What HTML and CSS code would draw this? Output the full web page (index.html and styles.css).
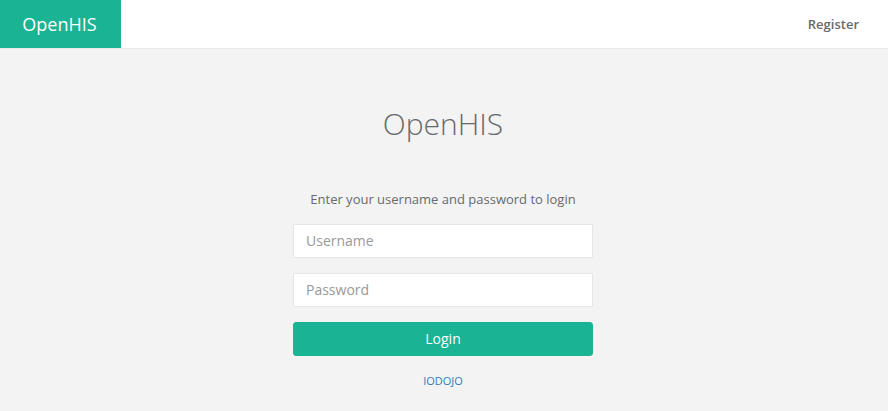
FILE: index.html
```html
<!DOCTYPE html>
<html>
<head>
<meta charset="utf-8">
<link rel="stylesheet" href="styles.css">
</head>
<body>
<nav class="navbar">
  <a class="brand" href="#">OpenHIS</a>
  <a class="nav-link" href="#">Register</a>
</nav>
<main class="content">
  <div class="login-box">
    <h1 class="logo">OpenHIS</h1>
    <p class="intro">Enter your username and password to login</p>
    <form class="form">
      <input class="field" type="text" placeholder="Username">
      <input class="field" type="password" placeholder="Password">
      <button class="btn" type="button">Login</button>
    </form>
    <a class="footer-link" href="#">IODOJO</a>
  </div>
</main>
</body>
</html>
```
FILE: styles.css
```css
* { box-sizing: border-box; }
html, body { margin: 0; height: 100%; }
body {
  background: #f3f3f4;
  font-family: "Open Sans", "Liberation Sans", sans-serif;
  font-size: 13px;
  color: #676a6c;
}
.navbar {
  display: flex;
  justify-content: space-between;
  align-items: stretch;
  height: 49px;
  background: #fff;
  border-bottom: 1px solid #e7eaec;
}
.brand {
  display: flex;
  align-items: center;
  justify-content: center;
  width: 121px;
  background: #1ab394;
  color: #fff;
  font-size: 18px;
  padding-right: 2px;
  text-decoration: none;
}
.nav-link {
  display: flex;
  align-items: center;
  padding: 0 29px 0 20px;
  color: #676a6c;
  font-weight: 600;
  font-size: 13px;
  text-decoration: none;
}
.content {
  display: flex;
  justify-content: center;
  padding-right: 2px;
}
.login-box {
  width: 300px;
  display: flex;
  flex-direction: column;
  align-items: center;
  padding-top: 55px;
}
.logo {
  margin: 0;
  font-size: 30px;
  font-weight: 300;
  line-height: 40px;
  color: #676a6c;
}
.intro {
  margin: 45px 0 0;
  line-height: 20px;
}
.form {
  width: 100%;
  display: flex;
  flex-direction: column;
  gap: 15px;
  margin-top: 15px;
}
.field {
  height: 34px;
  width: 100%;
  border: 1px solid #e5e6e7;
  border-radius: 1px;
  background: #fff;
  padding: 4px 12px 6px;
  font-family: inherit;
  font-size: 14px;
  color: #676a6c;
  outline: none;
}
.field::placeholder { color: #999; }
.btn {
  height: 34px;
  width: 100%;
  border: 1px solid #1ab394;
  border-radius: 3px;
  background: #1ab394;
  color: #fff;
  font-family: inherit;
  font-size: 14px;
  padding: 0 12px 2px;
}
.footer-link {
  margin-top: 17px;
  font-size: 11px;
  color: #337ab7;
  text-decoration: none;
}
```
